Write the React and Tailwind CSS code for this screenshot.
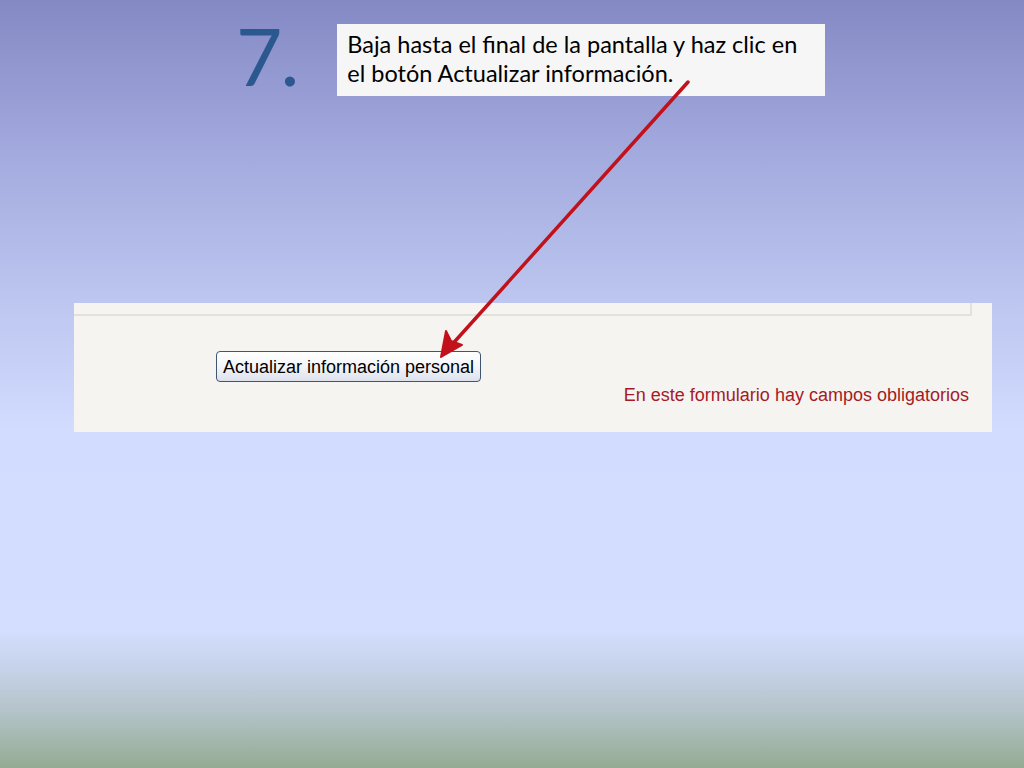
import React from 'react';

const Arrow = () => (
  <svg className="absolute left-0 top-0 pointer-events-none" width="1024" height="768" viewBox="0 0 1024 768">
    <line x1="688" y1="82" x2="448" y2="349" stroke="#c1121c" strokeWidth="3.5" strokeLinecap="round" />
    <path d="M441 357 L446 331 L451 341 L462 345 Z" fill="#c1121c" stroke="#c1121c" strokeWidth="2" strokeLinejoin="round" />
  </svg>
);

export default function App() {
  return (
    <div className="relative w-[1024px] h-[768px] overflow-hidden bg-[linear-gradient(180deg,#8489c4_0%,#a3aade_20%,#bcc6ef_39%,#d2dcff_56%,#d4deff_82%,#c3d0e4_88%,#b2c2c6_93%,#94ab93_100%)]">
      {/* heading row */}
      <div className="flex items-start pt-[15px] pl-[236px]">
        <div className="text-[80px] leading-[80px] text-[#2c5890] font-['Lato','Open_Sans',sans-serif] tracking-tight">7.</div>
        <div className="ml-[40px] mt-[9px] w-[488px] h-[72px] bg-[#f6f6f6] pl-[10px] pr-[6px] pt-[6px] text-[23.5px] leading-[29px] text-black font-['Lato','Open_Sans',sans-serif]">
          Baja hasta el final de la pantalla y haz clic en el botón Actualizar información.
        </div>
      </div>

      {/* form footer panel */}
      <div className="ml-[74px] mt-[207px] w-[918px] h-[129px] bg-[#f5f4f0] font-['Liberation_Sans',Arial,sans-serif]">
        <div className="w-[898px] h-[13px] border-b-2 border-r-2 border-[#e2e1dc]"></div>
        <div className="flex pl-[142px] pt-[35px]">
          <button className="h-[31px] px-[6px] rounded-[4px] border border-[#3f5670] bg-[linear-gradient(180deg,#ffffff_0%,#f4f5f9_50%,#dde1ec_100%)] text-[18px] text-black leading-none">
            Actualizar información personal
          </button>
        </div>
        <div className="flex justify-end pr-[23px] mt-[3px]">
          <span className="text-[18px] leading-[20px] text-[#a51a26]">En este formulario hay campos obligatorios</span>
        </div>
      </div>

      <Arrow />
    </div>
  );
}
